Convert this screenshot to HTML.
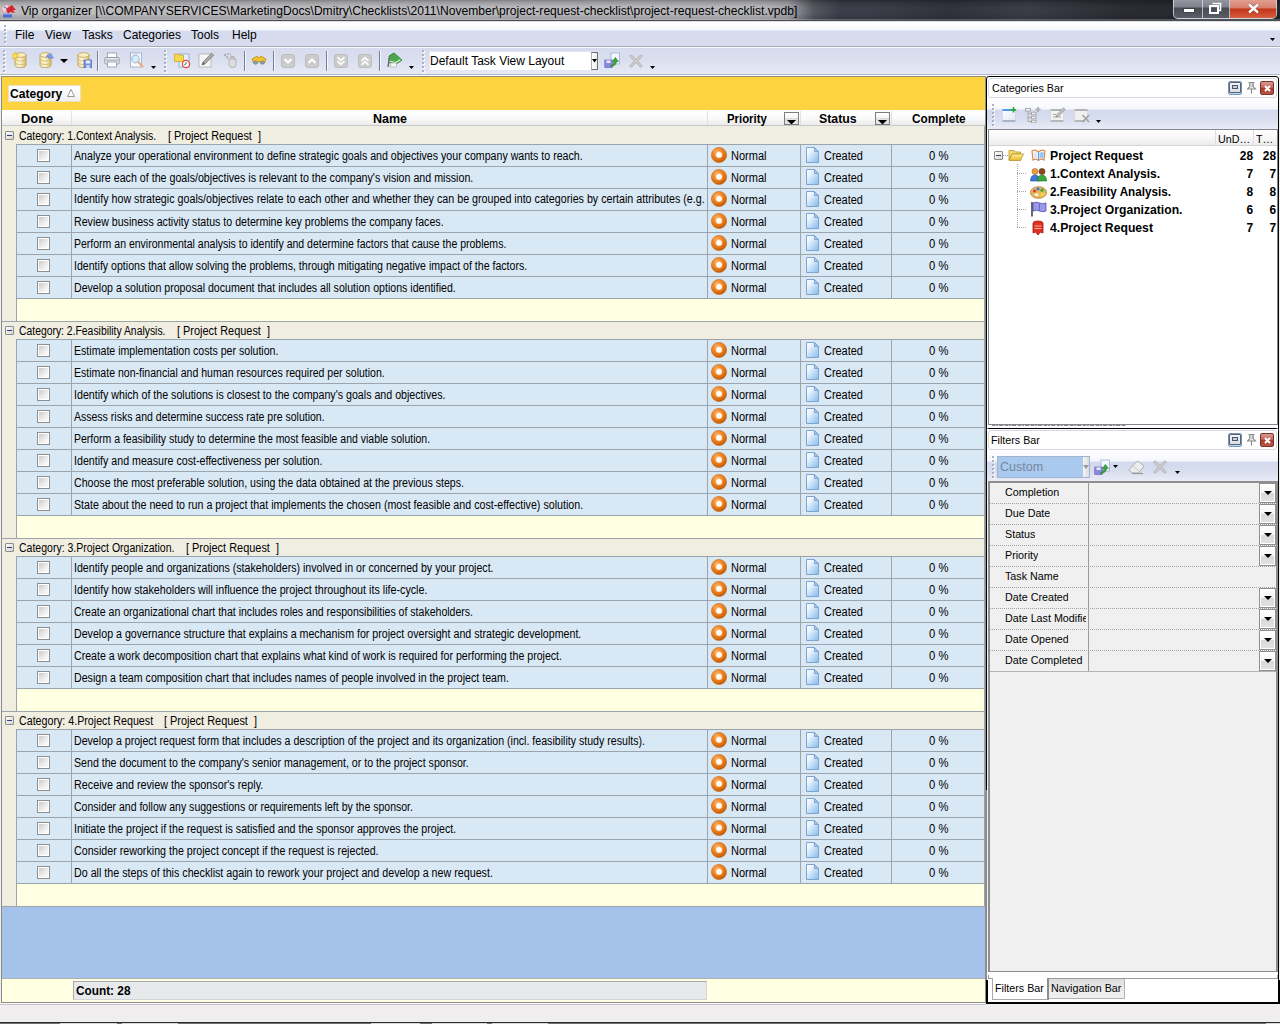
<!DOCTYPE html>
<html lang="en"><head><meta charset="utf-8"><title>Vip organizer</title>
<style>
html,body{margin:0;padding:0}
body{width:1280px;height:1024px;position:relative;overflow:hidden;background:#f0f0f0;font-family:"Liberation Sans",sans-serif;color:#000}
div,span,svg{position:absolute;box-sizing:border-box}
.g{white-space:pre;font-size:12.5px;line-height:16px;transform:scaleX(.848);transform-origin:0 0}
.gb{white-space:nowrap;font-size:12.5px;line-height:16px;font-weight:bold;transform:scaleX(.86);transform-origin:0 0}
.ui{white-space:nowrap;font-size:12px;line-height:16px}
.th{white-space:nowrap;font-size:11px;line-height:14px;transform:scaleX(.975);transform-origin:0 0}

</style></head>
<body>
<svg width="0" height="0" style="left:0;top:0"><defs>
<radialGradient id="pg1" cx="38%" cy="30%" r="75%"><stop offset="0" stop-color="#ffb060"/><stop offset="0.45" stop-color="#f08420"/><stop offset="0.8" stop-color="#d96a0c"/><stop offset="1" stop-color="#a84c06"/></radialGradient>
<radialGradient id="pg2" cx="50%" cy="50%" r="50%"><stop offset="0" stop-color="#fff"/><stop offset="0.62" stop-color="#fff"/><stop offset="1" stop-color="#ffd09a" stop-opacity="0.6"/></radialGradient>
<linearGradient id="pgd" x1="0" y1="0" x2="1" y2="1"><stop offset="0" stop-color="#ffffff"/><stop offset="0.3" stop-color="#eaf3fc"/><stop offset="0.65" stop-color="#b4d6f4"/><stop offset="1" stop-color="#86bbec"/></linearGradient>
<g id="prio"><circle cx="8" cy="8" r="7.6" fill="url(#pg1)" stroke="#c46a18" stroke-width="0.6"/><circle cx="8" cy="7.8" r="3.5" fill="url(#pg2)"/></g>
<g id="page"><path d="M0.5 0.5 H8.5 L12.5 4.5 V15.5 H0.5 Z" fill="url(#pgd)" stroke="#7ea4d2" stroke-width="1"/><path d="M8.5 0.5 V4.5 H12.5 Z" fill="#a9c6ee" stroke="#7ea4d2" stroke-width="1" stroke-linejoin="round"/></g>

<linearGradient id="fg" x1="0" y1="0" x2="0" y2="1"><stop offset="0" stop-color="#fff0a0"/><stop offset="1" stop-color="#e8b820"/></linearGradient>
<g id="folder"><path d="M1 3.5 H6 L7.5 5 H12.5 V7 H4 L1 13 Z" fill="#f7dc6a" stroke="#b8902a" stroke-width="0.8"/><path d="M4 7 H15.5 L12.5 13.5 H1 Z" fill="url(#fg)" stroke="#b8902a" stroke-width="0.8"/></g>
<g id="ti0"><path d="M2 4 Q5 2 8.5 5 Q12 2 15 4 L14 13 Q11 11 8.5 13.5 Q6 11 3 13 Z" fill="#fff" stroke="#e08a4a" stroke-width="1.2"/><path d="M8.5 5 V13.5" stroke="#6aa0e0" stroke-width="1.2"/><path d="M9.5 6 Q12 4.5 14 5.5 L13.3 11.5 Q11 10.5 9.5 12 Z" fill="#9cc4f2"/><path d="M7.5 6 Q5 4.5 3.2 5.5 L4 11.5 Q6 10.5 7.5 12 Z" fill="#dbe9fa"/></g>
<g id="ti1"><circle cx="5" cy="4.5" r="3" fill="#e8a040" stroke="#a86818" stroke-width="0.6"/><path d="M0.5 14 Q0.5 8 5 8 Q9.5 8 9.5 14 Z" fill="#3a78d8" stroke="#1e4ea0" stroke-width="0.6"/><circle cx="12" cy="4.5" r="3" fill="#8a4a20" stroke="#5a2a10" stroke-width="0.6"/><path d="M7.5 14 Q7.5 8 12 8 Q16.5 8 16.5 14 Z" fill="#3aa83a" stroke="#1e701e" stroke-width="0.6"/></g>
<g id="ti2"><ellipse cx="8.5" cy="8.5" rx="8" ry="5.8" fill="#e8b860" stroke="#a87828" stroke-width="0.8"/><circle cx="4.5" cy="7" r="1.6" fill="#d83a2a"/><circle cx="8" cy="5" r="1.6" fill="#3a78d8"/><circle cx="12" cy="6.2" r="1.6" fill="#3aa83a"/><circle cx="12.5" cy="10.3" r="1.6" fill="#f0e040"/><ellipse cx="6.5" cy="10.8" rx="2" ry="1.3" fill="#fff8e0"/></g>
<g id="ti3"><path d="M2 1 V15.5" stroke="#444" stroke-width="1.6"/><path d="M3 2 Q6.5 0.5 9.5 2 Q13 3.5 16 2 V10 Q13 11.5 9.5 10 Q6.5 8.5 3 10 Z" fill="#9a9ae8" stroke="#4a4ab0" stroke-width="0.8"/><path d="M9.5 2 V10" stroke="#5a5ac0" stroke-width="0.8"/></g>
<g id="ti4"><path d="M3 3 Q3 1 8 1 Q13 1 13 3 V13 L10.5 12 L8 15 L5.5 12 L3 13 Z" fill="#e03020" stroke="#a01810" stroke-width="0.8"/><path d="M4.5 6 H11.5 M4.5 8.5 H11.5" stroke="#ffb0a0" stroke-width="1.2"/></g>

<linearGradient id="dbg" x1="0" y1="0" x2="1" y2="0"><stop offset="0" stop-color="#f3e3a8"/><stop offset="0.45" stop-color="#fdf6d8"/><stop offset="1" stop-color="#d9bd6a"/></linearGradient>
<g id="db"><path d="M2 3 V13 Q2 15.5 7.5 15.5 Q13 15.5 13 13 V3 Z" fill="url(#dbg)" stroke="#b79a4c" stroke-width="0.8"/><ellipse cx="7.5" cy="3" rx="5.5" ry="2.3" fill="#fbf0c4" stroke="#b79a4c" stroke-width="0.8"/><path d="M2 6.5 Q2 9 7.5 9 Q13 9 13 6.5 M2 10 Q2 12.5 7.5 12.5 Q13 12.5 13 10" fill="none" stroke="#c9ad5c" stroke-width="0.7"/></g>
<g id="tb0"><use href="#db" x="1"/><path d="M3 0 L4 2.6 L6.8 2.8 L4.6 4.6 L5.4 7.2 L3 5.7 L0.6 7.2 L1.4 4.6 L-0.8 2.8 L2 2.6 Z" fill="#ffe24a" stroke="#d8a818" stroke-width="0.5"/></g>
<g id="tb1"><use href="#db"/><path d="M8 5 Q9 1.5 12 2.5 L12.5 1 L15.5 6 L10 6.5 L11 4.5 Q9.5 4 9 5.5 Z" fill="#7f9fe4" stroke="#5f80cc" stroke-width="0.5"/></g>
<g id="tb2"><use href="#db"/><rect x="8" y="8" width="8" height="8" fill="#7b8fd8" stroke="#5a6cb8" stroke-width="0.8"/><rect x="9.8" y="8.5" width="4.4" height="3" fill="#e8eefc"/><rect x="10.2" y="13" width="3.6" height="3" fill="#c8d2f0"/></g>
<g id="tb3"><rect x="3.5" y="1" width="9" height="5" fill="#fff" stroke="#9098a8" stroke-width="0.8"/><rect x="0.8" y="5.5" width="14.4" height="6.5" rx="1.2" fill="#e4e6ec" stroke="#8890a0" stroke-width="0.8"/><rect x="3.5" y="10" width="9" height="5" fill="#fff" stroke="#9098a8" stroke-width="0.8"/><rect x="1.5" y="7.5" width="13" height="1.6" fill="#b8bcc8"/></g>
<g id="tb4"><rect x="1.5" y="1" width="11" height="14" fill="#f8f9fc" stroke="#a0a8b8" stroke-width="0.8"/><circle cx="6.5" cy="7" r="3.8" fill="#d8ebf8" stroke="#9cc4e4" stroke-width="1.2"/><path d="M9.3 10 L13.5 14.5" stroke="#e4ae80" stroke-width="2" stroke-linecap="round"/></g>
<g id="tb5"><rect x="5" y="2" width="10" height="13" fill="#e8f0fc" stroke="#8aa4d0" stroke-width="0.8"/><path d="M0.5 2 H4.5 L5.5 3.2 H9.5 V9.5 H0.5 Z" fill="#f8d84a" stroke="#c8a020" stroke-width="0.7"/><circle cx="12" cy="12" r="3.6" fill="#fff" stroke="#e04a4a" stroke-width="1.3"/><path d="M12 12 L10.2 12.8 M12 12 V10" stroke="#3a8a5a" stroke-width="1"/></g>
<g id="tb6"><rect x="1" y="2" width="12" height="13" fill="#f6f6f6" stroke="#b0b0b0" stroke-width="0.8"/><path d="M4 13 L5 10 L13.5 1.2 L15.8 3.2 L7 12 Z" fill="#a8a8a8" stroke="#787878" stroke-width="0.7"/><path d="M4 13 L5 10 L7 12 Z" fill="#606060"/></g>
<g id="tb7"><path d="M7 7 H14 V13 Q14 15.5 10.5 15.5 Q7 15.5 7 13 Z" fill="#dcdcdc" stroke="#a8a8a8" stroke-width="0.8"/><path d="M9 7 V4.5 H12 V7" fill="#c8c8c8" stroke="#a0a0a0" stroke-width="0.7"/><circle cx="3" cy="3" r="1.3" fill="#b0b0b0"/><circle cx="6" cy="1.8" r="1.1" fill="#b8b8b8"/><circle cx="5.2" cy="5.2" r="1.2" fill="#b0b0b0"/><circle cx="8.5" cy="2.5" r="1" fill="#bcbcbc"/></g>
<g id="tb8"><path d="M1 6 L6 3 L8 5 L10 3 L15 6 L13.5 10 Q11.5 12 9.5 10 L8 8 L6.5 10 Q4.5 12 2.5 10 Z" fill="#f0c030" stroke="#b88810" stroke-width="0.7"/><ellipse cx="4.6" cy="9.6" rx="2" ry="1.6" fill="#8aa4b8" stroke="#5a6a78" stroke-width="0.5"/><ellipse cx="11.4" cy="9.6" rx="2" ry="1.6" fill="#8aa4b8" stroke="#5a6a78" stroke-width="0.5"/></g>
<g id="gbtn"><rect x="0.5" y="0.5" width="13" height="13" rx="2" fill="#cbcbcb" stroke="#bdbdbd" stroke-width="1"/></g>
<g id="tb9"><use href="#gbtn"/><path d="M3.5 5 L7 8.5 L10.5 5" fill="none" stroke="#fff" stroke-width="2.2"/></g>
<g id="tb10"><use href="#gbtn"/><path d="M3.5 9 L7 5.5 L10.5 9" fill="none" stroke="#fff" stroke-width="2.2"/></g>
<g id="tb11"><use href="#gbtn"/><path d="M3.5 3.2 L7 6.4 L10.5 3.2 M3.5 7.2 L7 10.4 L10.5 7.2" fill="none" stroke="#fff" stroke-width="1.8"/></g>
<g id="tb12"><use href="#gbtn"/><path d="M3.5 6.8 L7 3.6 L10.5 6.8 M3.5 10.8 L7 7.6 L10.5 10.8" fill="none" stroke="#fff" stroke-width="1.8"/></g>
<g id="tb13"><path d="M2 14.5 L3.5 3.5 L8 1 L16 8 L10.5 12 L4 10.5" fill="#4aa84a" stroke="#2a7a2a" stroke-width="0.8"/><path d="M3 9 L10 10.5 L14.5 7.5" fill="none" stroke="#d8f0d0" stroke-width="1.2"/><path d="M2 15 L3.5 4" stroke="#6a6a6a" stroke-width="1.2"/><rect x="4.5" y="11" width="6" height="4" fill="#f4f4f4" stroke="#a8a8a8" stroke-width="0.6"/></g>
<g id="tb14"><rect x="7" y="1" width="8.5" height="11" fill="#f4f8fe" stroke="#9ab0d8" stroke-width="0.8"/><rect x="0.8" y="8" width="7.5" height="7.5" fill="#8a8ae0" stroke="#6a6ac0" stroke-width="0.7"/><rect x="2.5" y="8.4" width="4" height="2.6" fill="#e8e8fc"/><path d="M6 14 Q9 13.5 10.2 9.5 L8.4 9.5 L11.4 5.4 L14.4 9.5 L12.6 9.5 Q11.5 15 6 14 Z" fill="#3aa83a" stroke="#1e7a1e" stroke-width="0.6"/></g>
<g id="tb15"><path d="M2 2 L12 12 M12 2 L2 12" stroke="#b4b4b4" stroke-width="3" stroke-linecap="round"/><path d="M2 2 L12 12 M12 2 L2 12" stroke="#d0d0d0" stroke-width="1.2" stroke-linecap="round"/></g>
<g id="dar"><path d="M0 0 H5 L2.5 3 Z" fill="#000"/></g>

<linearGradient id="cwg" x1="0" y1="0" x2="1" y2="1"><stop offset="0" stop-color="#fff"/><stop offset="1" stop-color="#dfe6f2"/></linearGradient>
<g id="ct0"><rect x="0.5" y="3.5" width="13" height="10" fill="url(#cwg)" stroke="#c8d0e0" stroke-width="0.6"/><path d="M0.5 3 H13.5" stroke="#2a8ae0" stroke-width="1.6"/><path d="M0.5 14 H13.5" stroke="#8a9ab0" stroke-width="1.2"/><path d="M11.5 0 V5.4 M8.8 2.7 H14.2" stroke="#2aa82a" stroke-width="1.6"/></g>
<g id="ct1"><path d="M3 3 V14.5 M3 6.5 H7 M3 10.5 H7 M3 14.5 H7" fill="none" stroke="#a8a8a8" stroke-width="1"/><rect x="0.5" y="1.5" width="5" height="2.6" fill="#f0f0f0" stroke="#a0a0a0" stroke-width="0.8"/><rect x="6.5" y="5.2" width="4.5" height="2.6" fill="#f0f0f0" stroke="#a0a0a0" stroke-width="0.8"/><rect x="6.5" y="9.2" width="4.5" height="2.6" fill="#f0f0f0" stroke="#a0a0a0" stroke-width="0.8"/><rect x="6.5" y="13.2" width="4.5" height="2.6" fill="#f0f0f0" stroke="#a0a0a0" stroke-width="0.8"/><path d="M13 0 V5 M10.5 2.5 H15.5" stroke="#b0b0b0" stroke-width="1.8"/></g>
<g id="ct2"><rect x="0.5" y="3.5" width="13" height="10" fill="#f2f2f2" stroke="#d0d0d0" stroke-width="0.6"/><path d="M0.5 3 H13.5" stroke="#a8a8a8" stroke-width="1.6"/><path d="M0.5 14 H13.5" stroke="#a0a0a0" stroke-width="1.2"/><path d="M3 7.5 H6 M3 10 H11" stroke="#a8a8a8" stroke-width="1"/><path d="M6 10 L7 7.5 L13.5 0.8 L15.2 2.4 L8.6 9.2 Z" fill="#c8c8c8" stroke="#8a8a8a" stroke-width="0.7"/></g>
<g id="ct3"><rect x="0.5" y="2.5" width="13" height="10" fill="#f0f0f0" stroke="#d0d0d0" stroke-width="0.6"/><path d="M0.5 2 H13.5" stroke="#a8a8a8" stroke-width="1.6"/><path d="M0.5 13 H11" stroke="#a0a0a0" stroke-width="1.2"/><path d="M8.5 7 L15 14 M15 7 L8.5 14" stroke="#a0a0a0" stroke-width="1.5"/></g>
<g id="ft1"><path d="M1 10 L8 2 Q9.5 1 11 2 L15 5 Q16 6.5 15 8 L10 13 H4 Z" fill="#ececec" stroke="#a8a8a8" stroke-width="0.9"/><path d="M4 13.5 H15" stroke="#9a9a9a" stroke-width="1.3"/><path d="M5 6 L11 11" stroke="#c0c0c0" stroke-width="0.8"/></g>
</defs></svg>
<!-- title bar -->
<div style="left:0px;top:0px;width:1280px;height:22px;background:linear-gradient(100deg,#3b3e48 0,#3b3e48 68%,#30333b 74%,#3a3d46 80%,#2a2c33 88%,#24262c 100%)"></div>
<div style="left:-30px;top:-4px;width:870px;height:28px;background:linear-gradient(90deg,#bdbdc0 0,#b8b8bc 90%,rgba(184,184,188,.85) 94%,rgba(120,122,130,.4) 97%,rgba(59,62,72,0) 100%)"></div>
<div style="left:0px;top:0px;width:1280px;height:20px;background:linear-gradient(rgba(0,0,0,.3) 0,rgba(0,0,0,.16) 12%,rgba(0,0,0,0) 35%,rgba(0,0,0,0) 65%,rgba(0,0,0,.16) 100%)"></div>
<div style="left:0px;top:19px;width:1280px;height:1px;background:rgba(255,255,255,.22)"></div>
<div style="left:0px;top:20px;width:1280px;height:1px;background:#4a4b50"></div>
<div style="left:0px;top:21px;width:1280px;height:1px;background:#dfe0e6"></div>
<svg style="left:0px;top:3px" width="17" height="16" viewBox="0 0 17 16"><path d="M1 5 L7 1 L10 6 L4 10 Z" fill="#f4d0d4" stroke="#d88a94" stroke-width="0.7"/><path d="M6 6 L12 2 L16 7 L13 7 L15 10 L10 9 L8 11 Z" fill="#d8242c"/><path d="M3 11 H12 V14.5 H3 Z" fill="#4a6ad0"/><path d="M3 11 H12" stroke="#9ab0f0" stroke-width="1"/><path d="M4 4 L8 6" stroke="#5a6ac8" stroke-width="1"/></svg>
<span class="ui" style="left:21px;top:3px;font-size:12.5px;transform:scaleX(.967);transform-origin:0 0" id="ttl">Vip organizer [\\COMPANYSERVICES\MarketingDocs\Dmitry\Checklists\2011\November\project-request-checklist\project-request-checklist.vpdb]</span>
<div style="left:1173px;top:-3px;width:104px;height:22px;border:1px solid rgba(225,228,235,.75);border-radius:0 0 5px 5px;overflow:hidden;background:linear-gradient(#9a9da6 0,#7e818b 45%,#474a53 50%,#5a5d66 100%)"><div style="left:28px;top:0;width:1px;height:22px;background:rgba(225,228,235,.7)"></div><div style="left:55px;top:0;width:1px;height:22px;background:rgba(225,228,235,.7)"></div><div style="left:56px;top:0;width:47px;height:22px;background:linear-gradient(#e3a79a 0,#d77f6c 45%,#c4361a 50%,#d4573a 85%,#e07a50 100%)"></div></div>
<div style="left:1184px;top:9px;width:10px;height:3px;background:#fff;box-shadow:0 0 0 1px rgba(60,60,70,.6)"></div>
<svg style="left:1208px;top:2px" width="14" height="12" viewBox="0 0 14 12"><path d="M4.5 1.5 H12.5 V8.5 H10" fill="none" stroke="#fff" stroke-width="1.6"/><rect x="2" y="4" width="8" height="7" fill="none" stroke="#fff" stroke-width="2"/></svg>
<svg style="left:1247px;top:3px" width="13" height="11" viewBox="0 0 13 11"><path d="M2 1.5 L11 9.5 M11 1.5 L2 9.5" stroke="#5a1a10" stroke-width="3.6" opacity=".5"/><path d="M2 1.5 L11 9.5 M11 1.5 L2 9.5" stroke="#fff" stroke-width="2.4"/></svg>
<!-- menu bar -->
<div style="left:0px;top:22px;width:1280px;height:24px;background:linear-gradient(#fff 0,#f7f8fc 33%,#d6dbee 38%,#d6dbee 100%)"></div>
<div style="left:5px;top:26px;width:2px;height:2px;background:#fff"></div>
<div style="left:4px;top:25px;width:2px;height:2px;background:#aab0c6"></div>
<div style="left:5px;top:30px;width:2px;height:2px;background:#fff"></div>
<div style="left:4px;top:29px;width:2px;height:2px;background:#aab0c6"></div>
<div style="left:5px;top:34px;width:2px;height:2px;background:#fff"></div>
<div style="left:4px;top:33px;width:2px;height:2px;background:#aab0c6"></div>
<div style="left:5px;top:38px;width:2px;height:2px;background:#fff"></div>
<div style="left:4px;top:37px;width:2px;height:2px;background:#aab0c6"></div>
<div style="left:5px;top:42px;width:2px;height:2px;background:#fff"></div>
<div style="left:4px;top:41px;width:2px;height:2px;background:#aab0c6"></div>
<svg style="left:1270px;top:38px" width="5" height="3" viewBox="0 0 5 3"><path d="M0 0 H5 L2.5 3 Z" fill="#000"/></svg>
<span class="ui" style="left:15px;top:27px">File</span>
<span class="ui" style="left:45px;top:27px">View</span>
<span class="ui" style="left:82px;top:27px">Tasks</span>
<span class="ui" style="left:123px;top:27px">Categories</span>
<span class="ui" style="left:191px;top:27px">Tools</span>
<span class="ui" style="left:232px;top:27px">Help</span>
<!-- toolbar -->
<div style="left:0px;top:46px;width:1280px;height:30px;background:linear-gradient(#d5daed 0,#dbe0f0 50%,#e8ebf6 100%)"></div>
<div style="left:0px;top:46px;width:1280px;height:1px;background:#a8acbc"></div>
<div style="left:0px;top:47px;width:1280px;height:1px;background:#f8f9fd"></div>
<div style="left:0px;top:74px;width:1280px;height:1px;background:#b2b5c2"></div>
<div style="left:0px;top:75px;width:1280px;height:1px;background:#fbfbfe"></div>
<div style="left:4px;top:51px;width:2px;height:2px;background:#fff"></div>
<div style="left:3px;top:50px;width:2px;height:2px;background:#aab0c6"></div>
<div style="left:4px;top:55px;width:2px;height:2px;background:#fff"></div>
<div style="left:3px;top:54px;width:2px;height:2px;background:#aab0c6"></div>
<div style="left:4px;top:59px;width:2px;height:2px;background:#fff"></div>
<div style="left:3px;top:58px;width:2px;height:2px;background:#aab0c6"></div>
<div style="left:4px;top:63px;width:2px;height:2px;background:#fff"></div>
<div style="left:3px;top:62px;width:2px;height:2px;background:#aab0c6"></div>
<div style="left:4px;top:67px;width:2px;height:2px;background:#fff"></div>
<div style="left:3px;top:66px;width:2px;height:2px;background:#aab0c6"></div>
<div style="left:4px;top:71px;width:2px;height:2px;background:#fff"></div>
<div style="left:3px;top:70px;width:2px;height:2px;background:#aab0c6"></div>
<svg style="left:12px;top:52px" width="16" height="16" viewBox="0 0 16 16"><use href="#tb0"/></svg>
<svg style="left:38px;top:52px" width="16" height="16" viewBox="0 0 16 16"><use href="#tb1"/></svg>
<svg style="left:60px;top:59px" width="8" height="4" viewBox="0 0 8 4"><path d="M0 0 H8 L4 4 Z" fill="#000"/></svg>
<svg style="left:76px;top:52px" width="16" height="16" viewBox="0 0 16 16"><use href="#tb2"/></svg>
<div style="left:97px;top:51px;width:1px;height:20px;background:#7a8094"></div>
<div style="left:98px;top:51px;width:1px;height:20px;background:#f4f6fb"></div>
<svg style="left:104px;top:52px" width="16" height="16" viewBox="0 0 16 16"><use href="#tb3"/></svg>
<svg style="left:129px;top:52px" width="16" height="16" viewBox="0 0 16 16"><use href="#tb4"/></svg>
<svg style="left:151px;top:66px" width="5" height="3" viewBox="0 0 5 3"><use href="#dar"/></svg>
<div style="left:165px;top:51px;width:2px;height:2px;background:#fff"></div>
<div style="left:164px;top:50px;width:2px;height:2px;background:#aab0c6"></div>
<div style="left:165px;top:55px;width:2px;height:2px;background:#fff"></div>
<div style="left:164px;top:54px;width:2px;height:2px;background:#aab0c6"></div>
<div style="left:165px;top:59px;width:2px;height:2px;background:#fff"></div>
<div style="left:164px;top:58px;width:2px;height:2px;background:#aab0c6"></div>
<div style="left:165px;top:63px;width:2px;height:2px;background:#fff"></div>
<div style="left:164px;top:62px;width:2px;height:2px;background:#aab0c6"></div>
<div style="left:165px;top:67px;width:2px;height:2px;background:#fff"></div>
<div style="left:164px;top:66px;width:2px;height:2px;background:#aab0c6"></div>
<div style="left:165px;top:71px;width:2px;height:2px;background:#fff"></div>
<div style="left:164px;top:70px;width:2px;height:2px;background:#aab0c6"></div>
<svg style="left:174px;top:52px" width="17" height="17" viewBox="0 0 17 17"><use href="#tb5"/></svg>
<svg style="left:198px;top:52px" width="16" height="16" viewBox="0 0 16 16"><use href="#tb6"/></svg>
<svg style="left:222px;top:52px" width="16" height="16" viewBox="0 0 16 16"><use href="#tb7"/></svg>
<div style="left:244px;top:51px;width:1px;height:20px;background:#7a8094"></div>
<div style="left:245px;top:51px;width:1px;height:20px;background:#f4f6fb"></div>
<svg style="left:251px;top:53px" width="16" height="16" viewBox="0 0 16 16"><use href="#tb8"/></svg>
<div style="left:273px;top:51px;width:1px;height:20px;background:#7a8094"></div>
<div style="left:274px;top:51px;width:1px;height:20px;background:#f4f6fb"></div>
<svg style="left:281px;top:54px" width="14" height="14" viewBox="0 0 14 14"><use href="#tb9"/></svg>
<svg style="left:305px;top:54px" width="14" height="14" viewBox="0 0 14 14"><use href="#tb10"/></svg>
<div style="left:326px;top:51px;width:1px;height:20px;background:#7a8094"></div>
<div style="left:327px;top:51px;width:1px;height:20px;background:#f4f6fb"></div>
<svg style="left:334px;top:54px" width="14" height="14" viewBox="0 0 14 14"><use href="#tb11"/></svg>
<svg style="left:358px;top:54px" width="14" height="14" viewBox="0 0 14 14"><use href="#tb12"/></svg>
<div style="left:379px;top:51px;width:1px;height:20px;background:#7a8094"></div>
<div style="left:380px;top:51px;width:1px;height:20px;background:#f4f6fb"></div>
<svg style="left:386px;top:52px" width="17" height="16" viewBox="0 0 17 16"><use href="#tb13"/></svg>
<svg style="left:409px;top:66px" width="5" height="3" viewBox="0 0 5 3"><use href="#dar"/></svg>
<div style="left:423px;top:51px;width:2px;height:2px;background:#fff"></div>
<div style="left:422px;top:50px;width:2px;height:2px;background:#aab0c6"></div>
<div style="left:423px;top:55px;width:2px;height:2px;background:#fff"></div>
<div style="left:422px;top:54px;width:2px;height:2px;background:#aab0c6"></div>
<div style="left:423px;top:59px;width:2px;height:2px;background:#fff"></div>
<div style="left:422px;top:58px;width:2px;height:2px;background:#aab0c6"></div>
<div style="left:423px;top:63px;width:2px;height:2px;background:#fff"></div>
<div style="left:422px;top:62px;width:2px;height:2px;background:#aab0c6"></div>
<div style="left:423px;top:67px;width:2px;height:2px;background:#fff"></div>
<div style="left:422px;top:66px;width:2px;height:2px;background:#aab0c6"></div>
<div style="left:423px;top:71px;width:2px;height:2px;background:#fff"></div>
<div style="left:422px;top:70px;width:2px;height:2px;background:#aab0c6"></div>
<div style="left:429px;top:51px;width:170px;height:20px;background:#fff;border:1px solid #e3e6f0"></div>
<div style="left:591px;top:52px;width:7px;height:18px;background:linear-gradient(90deg,#fff,#ececec);border:1px solid #707070;border-left-color:#b0b0b0"></div>
<svg style="left:592px;top:59px" width="5" height="4" viewBox="0 0 5 4"><path d="M0 0 H5 L2.5 3.5 Z" fill="#000"/></svg>
<span class="ui" style="left:430px;top:53px">Default Task View Layout</span>
<svg style="left:604px;top:52px" width="17" height="16" viewBox="0 0 17 16"><use href="#tb14"/></svg>
<svg style="left:629px;top:54px" width="14" height="14" viewBox="0 0 14 14"><use href="#tb15"/></svg>
<svg style="left:650px;top:66px" width="5" height="3" viewBox="0 0 5 3"><use href="#dar"/></svg>
<!-- task grid -->
<div style="left:1px;top:76px;width:985px;height:927px;background:#a5c3ea;border:1px solid #8c8c8c;border-top-color:#8e8a74"></div>
<div style="left:2px;top:77px;width:983px;height:33px;background:#fdd33f"></div>
<div style="left:8px;top:85px;width:73px;height:17px;background:linear-gradient(#fff,#f1f1f1);border:1px solid #e6e0c0"></div>
<span class="gb" style="left:10px;top:86px;transform:scaleX(.965)">Category</span>
<svg style="left:66px;top:88px" width="10" height="10" viewBox="0 0 10 10"><path d="M1.5 8.5 L5 1.5 L8.5 8.5 Z" fill="#fff" stroke="#9a9a9a" stroke-width="1"/></svg>
<div style="left:2px;top:110px;width:983px;height:16px;background:linear-gradient(#fff 0,#fbfbfb 50%,#ebebeb 100%);border-bottom:1px solid #c9c9c9"></div>
<div style="left:71px;top:111px;width:1px;height:14px;background:#e2e2e2"></div>
<div style="left:707px;top:111px;width:1px;height:14px;background:#e2e2e2"></div>
<div style="left:800px;top:111px;width:1px;height:14px;background:#e2e2e2"></div>
<div style="left:891px;top:111px;width:1px;height:14px;background:#e2e2e2"></div>
<span class="gb" style="left:20.5px;top:111px;transform:scaleX(1.03)">Done</span>
<span class="gb" style="left:373px;top:111px;transform:scaleX(1.0)">Name</span>
<span class="gb" style="left:726.5px;top:111px;transform:scaleX(0.908)">Priority</span>
<span class="gb" style="left:819px;top:111px;transform:scaleX(0.985)">Status</span>
<span class="gb" style="left:912px;top:111px;transform:scaleX(0.942)">Complete</span>
<div style="left:784px;top:112px;width:15px;height:13px;background:linear-gradient(#fff 0,#f4f4f4 45%,#dedede 50%,#e6e6e6 100%);border:1px solid #7d7d7d"></div>
<svg style="left:787px;top:120px" width="9" height="4" viewBox="0 0 9 4"><path d="M0 0 H9 L4.5 4.5 Z" fill="#000"/></svg>
<div style="left:875px;top:112px;width:15px;height:13px;background:linear-gradient(#fff 0,#f4f4f4 45%,#dedede 50%,#e6e6e6 100%);border:1px solid #7d7d7d"></div>
<svg style="left:878px;top:120px" width="9" height="4" viewBox="0 0 9 4"><path d="M0 0 H9 L4.5 4.5 Z" fill="#000"/></svg>
<div style="left:2px;top:126px;width:983px;height:1px;background:#f0ede1"></div>
<div style="left:2px;top:127px;width:983px;height:18px;background:#f0ede1"></div>
<div style="left:16px;top:144px;width:969px;height:1px;background:#9ca5ad"></div>
<div style="left:5px;top:131px;width:9px;height:9px;background:linear-gradient(135deg,#fff,#d6d4c8);border:1px solid #8c8c8c;border-radius:1px"></div>
<div style="left:7px;top:135px;width:5px;height:1px;background:#2a3a8c"></div>
<span class="g" style="left:19px;top:128px;transform:scaleX(0.837)">Category: 1.Context Analysis.</span>
<span class="g" style="left:168px;top:128px;transform:scaleX(.875)">[ Project Request  ]</span>
<div style="left:2px;top:145px;width:15px;height:177px;background:#f0ede1;border-right:1px solid #9ca5ad"></div>
<div style="left:17px;top:145px;width:968px;height:22px;background:#d9e8f5;border-bottom:1px solid #9ca5ad"></div>
<div style="left:71px;top:145px;width:1px;height:21px;background:#9ca5ad"></div>
<div style="left:707px;top:145px;width:1px;height:21px;background:#9ca5ad"></div>
<div style="left:800px;top:145px;width:1px;height:21px;background:#9ca5ad"></div>
<div style="left:891px;top:145px;width:1px;height:21px;background:#9ca5ad"></div>
<div style="left:37px;top:149px;width:13px;height:13px;background:linear-gradient(135deg,#c9c9c9,#ececec 55%,#fdfdfd) content-box,#fff;padding:1px;border:1px solid #8e8f8f"></div>
<span class="g" style="left:73.5px;top:148px;max-width:745px;overflow:hidden;transform:scaleX(0.8492)">Analyze your operational environment to define strategic goals and objectives your company wants to reach.</span>
<svg style="left:711px;top:147px" width="16" height="16" viewBox="0 0 16 16"><use href="#prio"/></svg><span class="g" style="left:731px;top:148px;transform:scaleX(.88)">Normal</span>
<svg style="left:806px;top:147px" width="13" height="16" viewBox="0 0 13 16"><use href="#page"/></svg><span class="g" style="left:824px;top:148px;transform:scaleX(.875)">Created</span>
<span class="g" style="left:929px;top:148px;transform:scaleX(.9)">0 %</span>
<div style="left:17px;top:167px;width:968px;height:22px;background:#d9e8f5;border-bottom:1px solid #9ca5ad"></div>
<div style="left:71px;top:167px;width:1px;height:21px;background:#9ca5ad"></div>
<div style="left:707px;top:167px;width:1px;height:21px;background:#9ca5ad"></div>
<div style="left:800px;top:167px;width:1px;height:21px;background:#9ca5ad"></div>
<div style="left:891px;top:167px;width:1px;height:21px;background:#9ca5ad"></div>
<div style="left:37px;top:171px;width:13px;height:13px;background:linear-gradient(135deg,#c9c9c9,#ececec 55%,#fdfdfd) content-box,#fff;padding:1px;border:1px solid #8e8f8f"></div>
<span class="g" style="left:73.5px;top:170px;max-width:745px;overflow:hidden;transform:scaleX(0.8534)">Be sure each of the goals/objectives is relevant to the company&#x27;s vision and mission.</span>
<svg style="left:711px;top:169px" width="16" height="16" viewBox="0 0 16 16"><use href="#prio"/></svg><span class="g" style="left:731px;top:170px;transform:scaleX(.88)">Normal</span>
<svg style="left:806px;top:169px" width="13" height="16" viewBox="0 0 13 16"><use href="#page"/></svg><span class="g" style="left:824px;top:170px;transform:scaleX(.875)">Created</span>
<span class="g" style="left:929px;top:170px;transform:scaleX(.9)">0 %</span>
<div style="left:17px;top:189px;width:968px;height:22px;background:#d9e8f5;border-bottom:1px solid #9ca5ad"></div>
<div style="left:71px;top:189px;width:1px;height:21px;background:#9ca5ad"></div>
<div style="left:707px;top:189px;width:1px;height:21px;background:#9ca5ad"></div>
<div style="left:800px;top:189px;width:1px;height:21px;background:#9ca5ad"></div>
<div style="left:891px;top:189px;width:1px;height:21px;background:#9ca5ad"></div>
<div style="left:37px;top:193px;width:13px;height:13px;background:linear-gradient(135deg,#c9c9c9,#ececec 55%,#fdfdfd) content-box,#fff;padding:1px;border:1px solid #8e8f8f"></div>
<span class="g" style="left:73.5px;top:191px;max-width:745px;overflow:hidden;transform:scaleX(0.8563)">Identify how strategic goals/objectives relate to each other and whether they can be grouped into categories by certain attributes (e.g.</span>
<svg style="left:711px;top:191px" width="16" height="16" viewBox="0 0 16 16"><use href="#prio"/></svg><span class="g" style="left:731px;top:192px;transform:scaleX(.88)">Normal</span>
<svg style="left:806px;top:191px" width="13" height="16" viewBox="0 0 13 16"><use href="#page"/></svg><span class="g" style="left:824px;top:192px;transform:scaleX(.875)">Created</span>
<span class="g" style="left:929px;top:192px;transform:scaleX(.9)">0 %</span>
<div style="left:17px;top:211px;width:968px;height:22px;background:#d9e8f5;border-bottom:1px solid #9ca5ad"></div>
<div style="left:71px;top:211px;width:1px;height:21px;background:#9ca5ad"></div>
<div style="left:707px;top:211px;width:1px;height:21px;background:#9ca5ad"></div>
<div style="left:800px;top:211px;width:1px;height:21px;background:#9ca5ad"></div>
<div style="left:891px;top:211px;width:1px;height:21px;background:#9ca5ad"></div>
<div style="left:37px;top:215px;width:13px;height:13px;background:linear-gradient(135deg,#c9c9c9,#ececec 55%,#fdfdfd) content-box,#fff;padding:1px;border:1px solid #8e8f8f"></div>
<span class="g" style="left:73.5px;top:214px;max-width:745px;overflow:hidden;transform:scaleX(0.8498)">Review business activity status to determine key problems the company faces.</span>
<svg style="left:711px;top:213px" width="16" height="16" viewBox="0 0 16 16"><use href="#prio"/></svg><span class="g" style="left:731px;top:214px;transform:scaleX(.88)">Normal</span>
<svg style="left:806px;top:213px" width="13" height="16" viewBox="0 0 13 16"><use href="#page"/></svg><span class="g" style="left:824px;top:214px;transform:scaleX(.875)">Created</span>
<span class="g" style="left:929px;top:214px;transform:scaleX(.9)">0 %</span>
<div style="left:17px;top:233px;width:968px;height:22px;background:#d9e8f5;border-bottom:1px solid #9ca5ad"></div>
<div style="left:71px;top:233px;width:1px;height:21px;background:#9ca5ad"></div>
<div style="left:707px;top:233px;width:1px;height:21px;background:#9ca5ad"></div>
<div style="left:800px;top:233px;width:1px;height:21px;background:#9ca5ad"></div>
<div style="left:891px;top:233px;width:1px;height:21px;background:#9ca5ad"></div>
<div style="left:37px;top:237px;width:13px;height:13px;background:linear-gradient(135deg,#c9c9c9,#ececec 55%,#fdfdfd) content-box,#fff;padding:1px;border:1px solid #8e8f8f"></div>
<span class="g" style="left:73.5px;top:236px;max-width:745px;overflow:hidden;transform:scaleX(0.8408)">Perform an environmental analysis to identify and determine factors that cause the problems.</span>
<svg style="left:711px;top:235px" width="16" height="16" viewBox="0 0 16 16"><use href="#prio"/></svg><span class="g" style="left:731px;top:236px;transform:scaleX(.88)">Normal</span>
<svg style="left:806px;top:235px" width="13" height="16" viewBox="0 0 13 16"><use href="#page"/></svg><span class="g" style="left:824px;top:236px;transform:scaleX(.875)">Created</span>
<span class="g" style="left:929px;top:236px;transform:scaleX(.9)">0 %</span>
<div style="left:17px;top:255px;width:968px;height:22px;background:#d9e8f5;border-bottom:1px solid #9ca5ad"></div>
<div style="left:71px;top:255px;width:1px;height:21px;background:#9ca5ad"></div>
<div style="left:707px;top:255px;width:1px;height:21px;background:#9ca5ad"></div>
<div style="left:800px;top:255px;width:1px;height:21px;background:#9ca5ad"></div>
<div style="left:891px;top:255px;width:1px;height:21px;background:#9ca5ad"></div>
<div style="left:37px;top:259px;width:13px;height:13px;background:linear-gradient(135deg,#c9c9c9,#ececec 55%,#fdfdfd) content-box,#fff;padding:1px;border:1px solid #8e8f8f"></div>
<span class="g" style="left:73.5px;top:258px;max-width:745px;overflow:hidden;transform:scaleX(0.8471)">Identify options that allow solving the problems, through mitigating negative impact of the factors.</span>
<svg style="left:711px;top:257px" width="16" height="16" viewBox="0 0 16 16"><use href="#prio"/></svg><span class="g" style="left:731px;top:258px;transform:scaleX(.88)">Normal</span>
<svg style="left:806px;top:257px" width="13" height="16" viewBox="0 0 13 16"><use href="#page"/></svg><span class="g" style="left:824px;top:258px;transform:scaleX(.875)">Created</span>
<span class="g" style="left:929px;top:258px;transform:scaleX(.9)">0 %</span>
<div style="left:17px;top:277px;width:968px;height:22px;background:#d9e8f5;border-bottom:1px solid #9ca5ad"></div>
<div style="left:71px;top:277px;width:1px;height:21px;background:#9ca5ad"></div>
<div style="left:707px;top:277px;width:1px;height:21px;background:#9ca5ad"></div>
<div style="left:800px;top:277px;width:1px;height:21px;background:#9ca5ad"></div>
<div style="left:891px;top:277px;width:1px;height:21px;background:#9ca5ad"></div>
<div style="left:37px;top:281px;width:13px;height:13px;background:linear-gradient(135deg,#c9c9c9,#ececec 55%,#fdfdfd) content-box,#fff;padding:1px;border:1px solid #8e8f8f"></div>
<span class="g" style="left:73.5px;top:280px;max-width:745px;overflow:hidden;transform:scaleX(0.8491)">Develop a solution proposal document that includes all solution options identified.</span>
<svg style="left:711px;top:279px" width="16" height="16" viewBox="0 0 16 16"><use href="#prio"/></svg><span class="g" style="left:731px;top:280px;transform:scaleX(.88)">Normal</span>
<svg style="left:806px;top:279px" width="13" height="16" viewBox="0 0 13 16"><use href="#page"/></svg><span class="g" style="left:824px;top:280px;transform:scaleX(.875)">Created</span>
<span class="g" style="left:929px;top:280px;transform:scaleX(.9)">0 %</span>
<div style="left:17px;top:299px;width:968px;height:23px;background:#ffffe1"></div>
<div style="left:2px;top:321px;width:983px;height:1px;background:#9ca5ad"></div>
<div style="left:2px;top:322px;width:983px;height:18px;background:#f0ede1"></div>
<div style="left:16px;top:339px;width:969px;height:1px;background:#9ca5ad"></div>
<div style="left:5px;top:326px;width:9px;height:9px;background:linear-gradient(135deg,#fff,#d6d4c8);border:1px solid #8c8c8c;border-radius:1px"></div>
<div style="left:7px;top:330px;width:5px;height:1px;background:#2a3a8c"></div>
<span class="g" style="left:19px;top:323px;transform:scaleX(0.83)">Category: 2.Feasibility Analysis.</span>
<span class="g" style="left:176.5px;top:323px;transform:scaleX(.875)">[ Project Request  ]</span>
<div style="left:2px;top:340px;width:15px;height:199px;background:#f0ede1;border-right:1px solid #9ca5ad"></div>
<div style="left:17px;top:340px;width:968px;height:22px;background:#d9e8f5;border-bottom:1px solid #9ca5ad"></div>
<div style="left:71px;top:340px;width:1px;height:21px;background:#9ca5ad"></div>
<div style="left:707px;top:340px;width:1px;height:21px;background:#9ca5ad"></div>
<div style="left:800px;top:340px;width:1px;height:21px;background:#9ca5ad"></div>
<div style="left:891px;top:340px;width:1px;height:21px;background:#9ca5ad"></div>
<div style="left:37px;top:344px;width:13px;height:13px;background:linear-gradient(135deg,#c9c9c9,#ececec 55%,#fdfdfd) content-box,#fff;padding:1px;border:1px solid #8e8f8f"></div>
<span class="g" style="left:73.5px;top:343px;max-width:745px;overflow:hidden;transform:scaleX(0.848)">Estimate implementation costs per solution.</span>
<svg style="left:711px;top:342px" width="16" height="16" viewBox="0 0 16 16"><use href="#prio"/></svg><span class="g" style="left:731px;top:343px;transform:scaleX(.88)">Normal</span>
<svg style="left:806px;top:342px" width="13" height="16" viewBox="0 0 13 16"><use href="#page"/></svg><span class="g" style="left:824px;top:343px;transform:scaleX(.875)">Created</span>
<span class="g" style="left:929px;top:343px;transform:scaleX(.9)">0 %</span>
<div style="left:17px;top:362px;width:968px;height:22px;background:#d9e8f5;border-bottom:1px solid #9ca5ad"></div>
<div style="left:71px;top:362px;width:1px;height:21px;background:#9ca5ad"></div>
<div style="left:707px;top:362px;width:1px;height:21px;background:#9ca5ad"></div>
<div style="left:800px;top:362px;width:1px;height:21px;background:#9ca5ad"></div>
<div style="left:891px;top:362px;width:1px;height:21px;background:#9ca5ad"></div>
<div style="left:37px;top:366px;width:13px;height:13px;background:linear-gradient(135deg,#c9c9c9,#ececec 55%,#fdfdfd) content-box,#fff;padding:1px;border:1px solid #8e8f8f"></div>
<span class="g" style="left:73.5px;top:365px;max-width:745px;overflow:hidden;transform:scaleX(0.8439)">Estimate non-financial and human resources required per solution.</span>
<svg style="left:711px;top:364px" width="16" height="16" viewBox="0 0 16 16"><use href="#prio"/></svg><span class="g" style="left:731px;top:365px;transform:scaleX(.88)">Normal</span>
<svg style="left:806px;top:364px" width="13" height="16" viewBox="0 0 13 16"><use href="#page"/></svg><span class="g" style="left:824px;top:365px;transform:scaleX(.875)">Created</span>
<span class="g" style="left:929px;top:365px;transform:scaleX(.9)">0 %</span>
<div style="left:17px;top:384px;width:968px;height:22px;background:#d9e8f5;border-bottom:1px solid #9ca5ad"></div>
<div style="left:71px;top:384px;width:1px;height:21px;background:#9ca5ad"></div>
<div style="left:707px;top:384px;width:1px;height:21px;background:#9ca5ad"></div>
<div style="left:800px;top:384px;width:1px;height:21px;background:#9ca5ad"></div>
<div style="left:891px;top:384px;width:1px;height:21px;background:#9ca5ad"></div>
<div style="left:37px;top:388px;width:13px;height:13px;background:linear-gradient(135deg,#c9c9c9,#ececec 55%,#fdfdfd) content-box,#fff;padding:1px;border:1px solid #8e8f8f"></div>
<span class="g" style="left:73.5px;top:387px;max-width:745px;overflow:hidden;transform:scaleX(0.8521)">Identify which of the solutions is closest to the company&#x27;s goals and objectives.</span>
<svg style="left:711px;top:386px" width="16" height="16" viewBox="0 0 16 16"><use href="#prio"/></svg><span class="g" style="left:731px;top:387px;transform:scaleX(.88)">Normal</span>
<svg style="left:806px;top:386px" width="13" height="16" viewBox="0 0 13 16"><use href="#page"/></svg><span class="g" style="left:824px;top:387px;transform:scaleX(.875)">Created</span>
<span class="g" style="left:929px;top:387px;transform:scaleX(.9)">0 %</span>
<div style="left:17px;top:406px;width:968px;height:22px;background:#d9e8f5;border-bottom:1px solid #9ca5ad"></div>
<div style="left:71px;top:406px;width:1px;height:21px;background:#9ca5ad"></div>
<div style="left:707px;top:406px;width:1px;height:21px;background:#9ca5ad"></div>
<div style="left:800px;top:406px;width:1px;height:21px;background:#9ca5ad"></div>
<div style="left:891px;top:406px;width:1px;height:21px;background:#9ca5ad"></div>
<div style="left:37px;top:410px;width:13px;height:13px;background:linear-gradient(135deg,#c9c9c9,#ececec 55%,#fdfdfd) content-box,#fff;padding:1px;border:1px solid #8e8f8f"></div>
<span class="g" style="left:73.5px;top:409px;max-width:745px;overflow:hidden;transform:scaleX(0.8409)">Assess risks and determine success rate pre solution.</span>
<svg style="left:711px;top:408px" width="16" height="16" viewBox="0 0 16 16"><use href="#prio"/></svg><span class="g" style="left:731px;top:409px;transform:scaleX(.88)">Normal</span>
<svg style="left:806px;top:408px" width="13" height="16" viewBox="0 0 13 16"><use href="#page"/></svg><span class="g" style="left:824px;top:409px;transform:scaleX(.875)">Created</span>
<span class="g" style="left:929px;top:409px;transform:scaleX(.9)">0 %</span>
<div style="left:17px;top:428px;width:968px;height:22px;background:#d9e8f5;border-bottom:1px solid #9ca5ad"></div>
<div style="left:71px;top:428px;width:1px;height:21px;background:#9ca5ad"></div>
<div style="left:707px;top:428px;width:1px;height:21px;background:#9ca5ad"></div>
<div style="left:800px;top:428px;width:1px;height:21px;background:#9ca5ad"></div>
<div style="left:891px;top:428px;width:1px;height:21px;background:#9ca5ad"></div>
<div style="left:37px;top:432px;width:13px;height:13px;background:linear-gradient(135deg,#c9c9c9,#ececec 55%,#fdfdfd) content-box,#fff;padding:1px;border:1px solid #8e8f8f"></div>
<span class="g" style="left:73.5px;top:431px;max-width:745px;overflow:hidden;transform:scaleX(0.8388)">Perform a feasibility study to determine the most feasible and viable solution.</span>
<svg style="left:711px;top:430px" width="16" height="16" viewBox="0 0 16 16"><use href="#prio"/></svg><span class="g" style="left:731px;top:431px;transform:scaleX(.88)">Normal</span>
<svg style="left:806px;top:430px" width="13" height="16" viewBox="0 0 13 16"><use href="#page"/></svg><span class="g" style="left:824px;top:431px;transform:scaleX(.875)">Created</span>
<span class="g" style="left:929px;top:431px;transform:scaleX(.9)">0 %</span>
<div style="left:17px;top:450px;width:968px;height:22px;background:#d9e8f5;border-bottom:1px solid #9ca5ad"></div>
<div style="left:71px;top:450px;width:1px;height:21px;background:#9ca5ad"></div>
<div style="left:707px;top:450px;width:1px;height:21px;background:#9ca5ad"></div>
<div style="left:800px;top:450px;width:1px;height:21px;background:#9ca5ad"></div>
<div style="left:891px;top:450px;width:1px;height:21px;background:#9ca5ad"></div>
<div style="left:37px;top:454px;width:13px;height:13px;background:linear-gradient(135deg,#c9c9c9,#ececec 55%,#fdfdfd) content-box,#fff;padding:1px;border:1px solid #8e8f8f"></div>
<span class="g" style="left:73.5px;top:453px;max-width:745px;overflow:hidden;transform:scaleX(0.8518)">Identify and measure cost-effectiveness per solution.</span>
<svg style="left:711px;top:452px" width="16" height="16" viewBox="0 0 16 16"><use href="#prio"/></svg><span class="g" style="left:731px;top:453px;transform:scaleX(.88)">Normal</span>
<svg style="left:806px;top:452px" width="13" height="16" viewBox="0 0 13 16"><use href="#page"/></svg><span class="g" style="left:824px;top:453px;transform:scaleX(.875)">Created</span>
<span class="g" style="left:929px;top:453px;transform:scaleX(.9)">0 %</span>
<div style="left:17px;top:472px;width:968px;height:22px;background:#d9e8f5;border-bottom:1px solid #9ca5ad"></div>
<div style="left:71px;top:472px;width:1px;height:21px;background:#9ca5ad"></div>
<div style="left:707px;top:472px;width:1px;height:21px;background:#9ca5ad"></div>
<div style="left:800px;top:472px;width:1px;height:21px;background:#9ca5ad"></div>
<div style="left:891px;top:472px;width:1px;height:21px;background:#9ca5ad"></div>
<div style="left:37px;top:476px;width:13px;height:13px;background:linear-gradient(135deg,#c9c9c9,#ececec 55%,#fdfdfd) content-box,#fff;padding:1px;border:1px solid #8e8f8f"></div>
<span class="g" style="left:73.5px;top:475px;max-width:745px;overflow:hidden;transform:scaleX(0.8476)">Choose the most preferable solution, using the data obtained at the previous steps.</span>
<svg style="left:711px;top:474px" width="16" height="16" viewBox="0 0 16 16"><use href="#prio"/></svg><span class="g" style="left:731px;top:475px;transform:scaleX(.88)">Normal</span>
<svg style="left:806px;top:474px" width="13" height="16" viewBox="0 0 13 16"><use href="#page"/></svg><span class="g" style="left:824px;top:475px;transform:scaleX(.875)">Created</span>
<span class="g" style="left:929px;top:475px;transform:scaleX(.9)">0 %</span>
<div style="left:17px;top:494px;width:968px;height:22px;background:#d9e8f5;border-bottom:1px solid #9ca5ad"></div>
<div style="left:71px;top:494px;width:1px;height:21px;background:#9ca5ad"></div>
<div style="left:707px;top:494px;width:1px;height:21px;background:#9ca5ad"></div>
<div style="left:800px;top:494px;width:1px;height:21px;background:#9ca5ad"></div>
<div style="left:891px;top:494px;width:1px;height:21px;background:#9ca5ad"></div>
<div style="left:37px;top:498px;width:13px;height:13px;background:linear-gradient(135deg,#c9c9c9,#ececec 55%,#fdfdfd) content-box,#fff;padding:1px;border:1px solid #8e8f8f"></div>
<span class="g" style="left:73.5px;top:497px;max-width:745px;overflow:hidden;transform:scaleX(0.8544)">State about the need to run a project that implements the chosen (most feasible and cost-effective) solution.</span>
<svg style="left:711px;top:496px" width="16" height="16" viewBox="0 0 16 16"><use href="#prio"/></svg><span class="g" style="left:731px;top:497px;transform:scaleX(.88)">Normal</span>
<svg style="left:806px;top:496px" width="13" height="16" viewBox="0 0 13 16"><use href="#page"/></svg><span class="g" style="left:824px;top:497px;transform:scaleX(.875)">Created</span>
<span class="g" style="left:929px;top:497px;transform:scaleX(.9)">0 %</span>
<div style="left:17px;top:516px;width:968px;height:23px;background:#ffffe1"></div>
<div style="left:2px;top:538px;width:983px;height:1px;background:#9ca5ad"></div>
<div style="left:2px;top:539px;width:983px;height:18px;background:#f0ede1"></div>
<div style="left:16px;top:556px;width:969px;height:1px;background:#9ca5ad"></div>
<div style="left:5px;top:543px;width:9px;height:9px;background:linear-gradient(135deg,#fff,#d6d4c8);border:1px solid #8c8c8c;border-radius:1px"></div>
<div style="left:7px;top:547px;width:5px;height:1px;background:#2a3a8c"></div>
<span class="g" style="left:19px;top:540px;transform:scaleX(0.841)">Category: 3.Project Organization.</span>
<span class="g" style="left:186px;top:540px;transform:scaleX(.875)">[ Project Request  ]</span>
<div style="left:2px;top:557px;width:15px;height:155px;background:#f0ede1;border-right:1px solid #9ca5ad"></div>
<div style="left:17px;top:557px;width:968px;height:22px;background:#d9e8f5;border-bottom:1px solid #9ca5ad"></div>
<div style="left:71px;top:557px;width:1px;height:21px;background:#9ca5ad"></div>
<div style="left:707px;top:557px;width:1px;height:21px;background:#9ca5ad"></div>
<div style="left:800px;top:557px;width:1px;height:21px;background:#9ca5ad"></div>
<div style="left:891px;top:557px;width:1px;height:21px;background:#9ca5ad"></div>
<div style="left:37px;top:561px;width:13px;height:13px;background:linear-gradient(135deg,#c9c9c9,#ececec 55%,#fdfdfd) content-box,#fff;padding:1px;border:1px solid #8e8f8f"></div>
<span class="g" style="left:73.5px;top:560px;max-width:745px;overflow:hidden;transform:scaleX(0.8492)">Identify people and organizations (stakeholders) involved in or concerned by your project.</span>
<svg style="left:711px;top:559px" width="16" height="16" viewBox="0 0 16 16"><use href="#prio"/></svg><span class="g" style="left:731px;top:560px;transform:scaleX(.88)">Normal</span>
<svg style="left:806px;top:559px" width="13" height="16" viewBox="0 0 13 16"><use href="#page"/></svg><span class="g" style="left:824px;top:560px;transform:scaleX(.875)">Created</span>
<span class="g" style="left:929px;top:560px;transform:scaleX(.9)">0 %</span>
<div style="left:17px;top:579px;width:968px;height:22px;background:#d9e8f5;border-bottom:1px solid #9ca5ad"></div>
<div style="left:71px;top:579px;width:1px;height:21px;background:#9ca5ad"></div>
<div style="left:707px;top:579px;width:1px;height:21px;background:#9ca5ad"></div>
<div style="left:800px;top:579px;width:1px;height:21px;background:#9ca5ad"></div>
<div style="left:891px;top:579px;width:1px;height:21px;background:#9ca5ad"></div>
<div style="left:37px;top:583px;width:13px;height:13px;background:linear-gradient(135deg,#c9c9c9,#ececec 55%,#fdfdfd) content-box,#fff;padding:1px;border:1px solid #8e8f8f"></div>
<span class="g" style="left:73.5px;top:582px;max-width:745px;overflow:hidden;transform:scaleX(0.8578)">Identify how stakeholders will influence the project throughout its life-cycle.</span>
<svg style="left:711px;top:581px" width="16" height="16" viewBox="0 0 16 16"><use href="#prio"/></svg><span class="g" style="left:731px;top:582px;transform:scaleX(.88)">Normal</span>
<svg style="left:806px;top:581px" width="13" height="16" viewBox="0 0 13 16"><use href="#page"/></svg><span class="g" style="left:824px;top:582px;transform:scaleX(.875)">Created</span>
<span class="g" style="left:929px;top:582px;transform:scaleX(.9)">0 %</span>
<div style="left:17px;top:601px;width:968px;height:22px;background:#d9e8f5;border-bottom:1px solid #9ca5ad"></div>
<div style="left:71px;top:601px;width:1px;height:21px;background:#9ca5ad"></div>
<div style="left:707px;top:601px;width:1px;height:21px;background:#9ca5ad"></div>
<div style="left:800px;top:601px;width:1px;height:21px;background:#9ca5ad"></div>
<div style="left:891px;top:601px;width:1px;height:21px;background:#9ca5ad"></div>
<div style="left:37px;top:605px;width:13px;height:13px;background:linear-gradient(135deg,#c9c9c9,#ececec 55%,#fdfdfd) content-box,#fff;padding:1px;border:1px solid #8e8f8f"></div>
<span class="g" style="left:73.5px;top:604px;max-width:745px;overflow:hidden;transform:scaleX(0.8433)">Create an organizational chart that includes roles and responsibilities of stakeholders.</span>
<svg style="left:711px;top:603px" width="16" height="16" viewBox="0 0 16 16"><use href="#prio"/></svg><span class="g" style="left:731px;top:604px;transform:scaleX(.88)">Normal</span>
<svg style="left:806px;top:603px" width="13" height="16" viewBox="0 0 13 16"><use href="#page"/></svg><span class="g" style="left:824px;top:604px;transform:scaleX(.875)">Created</span>
<span class="g" style="left:929px;top:604px;transform:scaleX(.9)">0 %</span>
<div style="left:17px;top:623px;width:968px;height:22px;background:#d9e8f5;border-bottom:1px solid #9ca5ad"></div>
<div style="left:71px;top:623px;width:1px;height:21px;background:#9ca5ad"></div>
<div style="left:707px;top:623px;width:1px;height:21px;background:#9ca5ad"></div>
<div style="left:800px;top:623px;width:1px;height:21px;background:#9ca5ad"></div>
<div style="left:891px;top:623px;width:1px;height:21px;background:#9ca5ad"></div>
<div style="left:37px;top:627px;width:13px;height:13px;background:linear-gradient(135deg,#c9c9c9,#ececec 55%,#fdfdfd) content-box,#fff;padding:1px;border:1px solid #8e8f8f"></div>
<span class="g" style="left:73.5px;top:626px;max-width:745px;overflow:hidden;transform:scaleX(0.852)">Develop a governance structure that explains a mechanism for project oversight and strategic development.</span>
<svg style="left:711px;top:625px" width="16" height="16" viewBox="0 0 16 16"><use href="#prio"/></svg><span class="g" style="left:731px;top:626px;transform:scaleX(.88)">Normal</span>
<svg style="left:806px;top:625px" width="13" height="16" viewBox="0 0 13 16"><use href="#page"/></svg><span class="g" style="left:824px;top:626px;transform:scaleX(.875)">Created</span>
<span class="g" style="left:929px;top:626px;transform:scaleX(.9)">0 %</span>
<div style="left:17px;top:645px;width:968px;height:22px;background:#d9e8f5;border-bottom:1px solid #9ca5ad"></div>
<div style="left:71px;top:645px;width:1px;height:21px;background:#9ca5ad"></div>
<div style="left:707px;top:645px;width:1px;height:21px;background:#9ca5ad"></div>
<div style="left:800px;top:645px;width:1px;height:21px;background:#9ca5ad"></div>
<div style="left:891px;top:645px;width:1px;height:21px;background:#9ca5ad"></div>
<div style="left:37px;top:649px;width:13px;height:13px;background:linear-gradient(135deg,#c9c9c9,#ececec 55%,#fdfdfd) content-box,#fff;padding:1px;border:1px solid #8e8f8f"></div>
<span class="g" style="left:73.5px;top:648px;max-width:745px;overflow:hidden;transform:scaleX(0.8483)">Create a work decomposition chart that explains what kind of work is required for performing the project.</span>
<svg style="left:711px;top:647px" width="16" height="16" viewBox="0 0 16 16"><use href="#prio"/></svg><span class="g" style="left:731px;top:648px;transform:scaleX(.88)">Normal</span>
<svg style="left:806px;top:647px" width="13" height="16" viewBox="0 0 13 16"><use href="#page"/></svg><span class="g" style="left:824px;top:648px;transform:scaleX(.875)">Created</span>
<span class="g" style="left:929px;top:648px;transform:scaleX(.9)">0 %</span>
<div style="left:17px;top:667px;width:968px;height:22px;background:#d9e8f5;border-bottom:1px solid #9ca5ad"></div>
<div style="left:71px;top:667px;width:1px;height:21px;background:#9ca5ad"></div>
<div style="left:707px;top:667px;width:1px;height:21px;background:#9ca5ad"></div>
<div style="left:800px;top:667px;width:1px;height:21px;background:#9ca5ad"></div>
<div style="left:891px;top:667px;width:1px;height:21px;background:#9ca5ad"></div>
<div style="left:37px;top:671px;width:13px;height:13px;background:linear-gradient(135deg,#c9c9c9,#ececec 55%,#fdfdfd) content-box,#fff;padding:1px;border:1px solid #8e8f8f"></div>
<span class="g" style="left:73.5px;top:670px;max-width:745px;overflow:hidden;transform:scaleX(0.8515)">Design a team composition chart that includes names of people involved in the project team.</span>
<svg style="left:711px;top:669px" width="16" height="16" viewBox="0 0 16 16"><use href="#prio"/></svg><span class="g" style="left:731px;top:670px;transform:scaleX(.88)">Normal</span>
<svg style="left:806px;top:669px" width="13" height="16" viewBox="0 0 13 16"><use href="#page"/></svg><span class="g" style="left:824px;top:670px;transform:scaleX(.875)">Created</span>
<span class="g" style="left:929px;top:670px;transform:scaleX(.9)">0 %</span>
<div style="left:17px;top:689px;width:968px;height:23px;background:#ffffe1"></div>
<div style="left:2px;top:711px;width:983px;height:1px;background:#9ca5ad"></div>
<div style="left:2px;top:712px;width:983px;height:18px;background:#f0ede1"></div>
<div style="left:16px;top:729px;width:969px;height:1px;background:#9ca5ad"></div>
<div style="left:5px;top:716px;width:9px;height:9px;background:linear-gradient(135deg,#fff,#d6d4c8);border:1px solid #8c8c8c;border-radius:1px"></div>
<div style="left:7px;top:720px;width:5px;height:1px;background:#2a3a8c"></div>
<span class="g" style="left:19px;top:713px;transform:scaleX(0.854)">Category: 4.Project Request</span>
<span class="g" style="left:164px;top:713px;transform:scaleX(.875)">[ Project Request  ]</span>
<div style="left:2px;top:730px;width:15px;height:177px;background:#f0ede1;border-right:1px solid #9ca5ad"></div>
<div style="left:17px;top:730px;width:968px;height:22px;background:#d9e8f5;border-bottom:1px solid #9ca5ad"></div>
<div style="left:71px;top:730px;width:1px;height:21px;background:#9ca5ad"></div>
<div style="left:707px;top:730px;width:1px;height:21px;background:#9ca5ad"></div>
<div style="left:800px;top:730px;width:1px;height:21px;background:#9ca5ad"></div>
<div style="left:891px;top:730px;width:1px;height:21px;background:#9ca5ad"></div>
<div style="left:37px;top:734px;width:13px;height:13px;background:linear-gradient(135deg,#c9c9c9,#ececec 55%,#fdfdfd) content-box,#fff;padding:1px;border:1px solid #8e8f8f"></div>
<span class="g" style="left:73.5px;top:733px;max-width:745px;overflow:hidden;transform:scaleX(0.849)">Develop a project request form that includes a description of the project and its organization (incl. feasibility study results).</span>
<svg style="left:711px;top:732px" width="16" height="16" viewBox="0 0 16 16"><use href="#prio"/></svg><span class="g" style="left:731px;top:733px;transform:scaleX(.88)">Normal</span>
<svg style="left:806px;top:732px" width="13" height="16" viewBox="0 0 13 16"><use href="#page"/></svg><span class="g" style="left:824px;top:733px;transform:scaleX(.875)">Created</span>
<span class="g" style="left:929px;top:733px;transform:scaleX(.9)">0 %</span>
<div style="left:17px;top:752px;width:968px;height:22px;background:#d9e8f5;border-bottom:1px solid #9ca5ad"></div>
<div style="left:71px;top:752px;width:1px;height:21px;background:#9ca5ad"></div>
<div style="left:707px;top:752px;width:1px;height:21px;background:#9ca5ad"></div>
<div style="left:800px;top:752px;width:1px;height:21px;background:#9ca5ad"></div>
<div style="left:891px;top:752px;width:1px;height:21px;background:#9ca5ad"></div>
<div style="left:37px;top:756px;width:13px;height:13px;background:linear-gradient(135deg,#c9c9c9,#ececec 55%,#fdfdfd) content-box,#fff;padding:1px;border:1px solid #8e8f8f"></div>
<span class="g" style="left:73.5px;top:755px;max-width:745px;overflow:hidden;transform:scaleX(0.8499)">Send the document to the company&#x27;s senior management, or to the project sponsor.</span>
<svg style="left:711px;top:754px" width="16" height="16" viewBox="0 0 16 16"><use href="#prio"/></svg><span class="g" style="left:731px;top:755px;transform:scaleX(.88)">Normal</span>
<svg style="left:806px;top:754px" width="13" height="16" viewBox="0 0 13 16"><use href="#page"/></svg><span class="g" style="left:824px;top:755px;transform:scaleX(.875)">Created</span>
<span class="g" style="left:929px;top:755px;transform:scaleX(.9)">0 %</span>
<div style="left:17px;top:774px;width:968px;height:22px;background:#d9e8f5;border-bottom:1px solid #9ca5ad"></div>
<div style="left:71px;top:774px;width:1px;height:21px;background:#9ca5ad"></div>
<div style="left:707px;top:774px;width:1px;height:21px;background:#9ca5ad"></div>
<div style="left:800px;top:774px;width:1px;height:21px;background:#9ca5ad"></div>
<div style="left:891px;top:774px;width:1px;height:21px;background:#9ca5ad"></div>
<div style="left:37px;top:778px;width:13px;height:13px;background:linear-gradient(135deg,#c9c9c9,#ececec 55%,#fdfdfd) content-box,#fff;padding:1px;border:1px solid #8e8f8f"></div>
<span class="g" style="left:73.5px;top:777px;max-width:745px;overflow:hidden;transform:scaleX(0.8618)">Receive and review the sponsor&#x27;s reply.</span>
<svg style="left:711px;top:776px" width="16" height="16" viewBox="0 0 16 16"><use href="#prio"/></svg><span class="g" style="left:731px;top:777px;transform:scaleX(.88)">Normal</span>
<svg style="left:806px;top:776px" width="13" height="16" viewBox="0 0 13 16"><use href="#page"/></svg><span class="g" style="left:824px;top:777px;transform:scaleX(.875)">Created</span>
<span class="g" style="left:929px;top:777px;transform:scaleX(.9)">0 %</span>
<div style="left:17px;top:796px;width:968px;height:22px;background:#d9e8f5;border-bottom:1px solid #9ca5ad"></div>
<div style="left:71px;top:796px;width:1px;height:21px;background:#9ca5ad"></div>
<div style="left:707px;top:796px;width:1px;height:21px;background:#9ca5ad"></div>
<div style="left:800px;top:796px;width:1px;height:21px;background:#9ca5ad"></div>
<div style="left:891px;top:796px;width:1px;height:21px;background:#9ca5ad"></div>
<div style="left:37px;top:800px;width:13px;height:13px;background:linear-gradient(135deg,#c9c9c9,#ececec 55%,#fdfdfd) content-box,#fff;padding:1px;border:1px solid #8e8f8f"></div>
<span class="g" style="left:73.5px;top:799px;max-width:745px;overflow:hidden;transform:scaleX(0.841)">Consider and follow any suggestions or requirements left by the sponsor.</span>
<svg style="left:711px;top:798px" width="16" height="16" viewBox="0 0 16 16"><use href="#prio"/></svg><span class="g" style="left:731px;top:799px;transform:scaleX(.88)">Normal</span>
<svg style="left:806px;top:798px" width="13" height="16" viewBox="0 0 13 16"><use href="#page"/></svg><span class="g" style="left:824px;top:799px;transform:scaleX(.875)">Created</span>
<span class="g" style="left:929px;top:799px;transform:scaleX(.9)">0 %</span>
<div style="left:17px;top:818px;width:968px;height:22px;background:#d9e8f5;border-bottom:1px solid #9ca5ad"></div>
<div style="left:71px;top:818px;width:1px;height:21px;background:#9ca5ad"></div>
<div style="left:707px;top:818px;width:1px;height:21px;background:#9ca5ad"></div>
<div style="left:800px;top:818px;width:1px;height:21px;background:#9ca5ad"></div>
<div style="left:891px;top:818px;width:1px;height:21px;background:#9ca5ad"></div>
<div style="left:37px;top:822px;width:13px;height:13px;background:linear-gradient(135deg,#c9c9c9,#ececec 55%,#fdfdfd) content-box,#fff;padding:1px;border:1px solid #8e8f8f"></div>
<span class="g" style="left:73.5px;top:821px;max-width:745px;overflow:hidden;transform:scaleX(0.85)">Initiate the project if the request is satisfied and the sponsor approves the project.</span>
<svg style="left:711px;top:820px" width="16" height="16" viewBox="0 0 16 16"><use href="#prio"/></svg><span class="g" style="left:731px;top:821px;transform:scaleX(.88)">Normal</span>
<svg style="left:806px;top:820px" width="13" height="16" viewBox="0 0 13 16"><use href="#page"/></svg><span class="g" style="left:824px;top:821px;transform:scaleX(.875)">Created</span>
<span class="g" style="left:929px;top:821px;transform:scaleX(.9)">0 %</span>
<div style="left:17px;top:840px;width:968px;height:22px;background:#d9e8f5;border-bottom:1px solid #9ca5ad"></div>
<div style="left:71px;top:840px;width:1px;height:21px;background:#9ca5ad"></div>
<div style="left:707px;top:840px;width:1px;height:21px;background:#9ca5ad"></div>
<div style="left:800px;top:840px;width:1px;height:21px;background:#9ca5ad"></div>
<div style="left:891px;top:840px;width:1px;height:21px;background:#9ca5ad"></div>
<div style="left:37px;top:844px;width:13px;height:13px;background:linear-gradient(135deg,#c9c9c9,#ececec 55%,#fdfdfd) content-box,#fff;padding:1px;border:1px solid #8e8f8f"></div>
<span class="g" style="left:73.5px;top:843px;max-width:745px;overflow:hidden;transform:scaleX(0.8545)">Consider reworking the project concept if the request is rejected.</span>
<svg style="left:711px;top:842px" width="16" height="16" viewBox="0 0 16 16"><use href="#prio"/></svg><span class="g" style="left:731px;top:843px;transform:scaleX(.88)">Normal</span>
<svg style="left:806px;top:842px" width="13" height="16" viewBox="0 0 13 16"><use href="#page"/></svg><span class="g" style="left:824px;top:843px;transform:scaleX(.875)">Created</span>
<span class="g" style="left:929px;top:843px;transform:scaleX(.9)">0 %</span>
<div style="left:17px;top:862px;width:968px;height:22px;background:#d9e8f5;border-bottom:1px solid #9ca5ad"></div>
<div style="left:71px;top:862px;width:1px;height:21px;background:#9ca5ad"></div>
<div style="left:707px;top:862px;width:1px;height:21px;background:#9ca5ad"></div>
<div style="left:800px;top:862px;width:1px;height:21px;background:#9ca5ad"></div>
<div style="left:891px;top:862px;width:1px;height:21px;background:#9ca5ad"></div>
<div style="left:37px;top:866px;width:13px;height:13px;background:linear-gradient(135deg,#c9c9c9,#ececec 55%,#fdfdfd) content-box,#fff;padding:1px;border:1px solid #8e8f8f"></div>
<span class="g" style="left:73.5px;top:865px;max-width:745px;overflow:hidden;transform:scaleX(0.8564)">Do all the steps of this checklist again to rework your project and develop a new request.</span>
<svg style="left:711px;top:864px" width="16" height="16" viewBox="0 0 16 16"><use href="#prio"/></svg><span class="g" style="left:731px;top:865px;transform:scaleX(.88)">Normal</span>
<svg style="left:806px;top:864px" width="13" height="16" viewBox="0 0 13 16"><use href="#page"/></svg><span class="g" style="left:824px;top:865px;transform:scaleX(.875)">Created</span>
<span class="g" style="left:929px;top:865px;transform:scaleX(.9)">0 %</span>
<div style="left:17px;top:884px;width:968px;height:23px;background:#ffffe1"></div>
<div style="left:2px;top:906px;width:983px;height:1px;background:#9ca5ad"></div>
<div style="left:984px;top:126px;width:1px;height:780px;background:#9ca5ad"></div>
<div style="left:2px;top:978px;width:983px;height:24px;background:#ffffe1;border-top:1px solid #b0b0b0"></div>
<div style="left:73px;top:981px;width:634px;height:19px;background:#e7e9eb;border:1px solid #d4d4d4;border-top-color:#a8a8a8;border-left-color:#a8a8a8"></div>
<span class="gb" style="left:76px;top:983px;transform:scaleX(.945)">Count: 28</span>
<!-- status bar -->
<div style="left:0px;top:1004px;width:1280px;height:20px;background:#f0eeee"></div>
<div style="left:0px;top:1003px;width:986px;height:1px;background:#fbfbfb"></div>
<div style="left:0px;top:1004px;width:986px;height:1px;background:#c6c6c6"></div>
<div style="left:0px;top:1022px;width:1280px;height:1px;background:#2a2a2a"></div>
<div style="left:0px;top:1023px;width:1280px;height:1px;background:#707070"></div>
<div style="left:60px;top:1023px;width:57px;height:1px;background:#d8d8d8"></div>
<div style="left:122px;top:1023px;width:56px;height:1px;background:#d8d8d8"></div>
<div style="left:371px;top:1023px;width:49px;height:1px;background:#d8d8d8"></div>
<div style="left:432px;top:1023px;width:55px;height:1px;background:#d8d8d8"></div>
<div style="left:492px;top:1023px;width:56px;height:1px;background:#d8d8d8"></div>
<div style="left:1266px;top:1023px;width:14px;height:1px;background:#d8d8d8"></div>
<!-- categories bar -->
<div style="left:986px;top:76px;width:293px;height:354px;background:#fff;border:1px solid #000;border-radius:3px 3px 0 0"></div>
<div style="left:988px;top:78px;width:289px;height:20px;background:#fff;border:1px solid #d5d8de;border-radius:3px"></div>
<span class="th" style="left:992px;top:81px">Categories Bar</span>
<div style="left:1228px;top:81px;width:14px;height:14px;background:linear-gradient(#eef1f6,#dfe3ea 70%,#b9d7f6 92%);border:1px solid #7b93bb;border-radius:2px"></div>
<div style="left:1229px;top:82px;width:12px;height:11px;border:1px solid #5a6170;border-radius:1px;background:linear-gradient(#f4f5f8,#d9dce4)"></div>
<div style="left:1232px;top:85px;width:6px;height:4px;border:1px solid #4d5563;background:#c9ced8"></div>
<svg style="left:1245px;top:81px" width="13" height="14" viewBox="0 0 13 14"><path d="M3.5 1.5 H9.5 M4.8 1.5 V5.5 L2.5 8 H10.5 L8.2 5.5 V1.5 M6.5 8 V12.5" fill="#e6e6e6" stroke="#8a8a8a" stroke-width="1.1"/><path d="M7.2 2.5 V6" stroke="#b0b0b0" stroke-width="1.2"/></svg>
<div style="left:1260px;top:81px;width:14px;height:14px;background:linear-gradient(#d59c94 0,#c0655a 45%,#a93a30 50%,#b9564a 100%);border:1px solid #7e2f28;border-radius:2px"></div>
<svg style="left:1264px;top:85px" width="7" height="7" viewBox="0 0 7 7"><path d="M1 1 L6 6 M6 1 L1 6" stroke="#fff" stroke-width="2"/></svg>
<div style="left:987px;top:98px;width:291px;height:31px;background:linear-gradient(#fff 0,#f6f7fc 35%,#d3d9ee 40%,#d9deef 70%,#e9ecf7 100%)"></div>
<div style="left:993px;top:105px;width:2px;height:2px;background:#fff"></div>
<div style="left:992px;top:104px;width:2px;height:2px;background:#aab0c6"></div>
<div style="left:993px;top:109px;width:2px;height:2px;background:#fff"></div>
<div style="left:992px;top:108px;width:2px;height:2px;background:#aab0c6"></div>
<div style="left:993px;top:113px;width:2px;height:2px;background:#fff"></div>
<div style="left:992px;top:112px;width:2px;height:2px;background:#aab0c6"></div>
<div style="left:993px;top:117px;width:2px;height:2px;background:#fff"></div>
<div style="left:992px;top:116px;width:2px;height:2px;background:#aab0c6"></div>
<div style="left:993px;top:121px;width:2px;height:2px;background:#fff"></div>
<div style="left:992px;top:120px;width:2px;height:2px;background:#aab0c6"></div>
<div style="left:993px;top:125px;width:2px;height:2px;background:#fff"></div>
<div style="left:992px;top:124px;width:2px;height:2px;background:#aab0c6"></div>
<svg style="left:1002px;top:107px" width="16" height="16" viewBox="0 0 16 16"><use href="#ct0"/></svg>
<svg style="left:1025px;top:107px" width="16" height="16" viewBox="0 0 16 16"><use href="#ct1"/></svg>
<svg style="left:1050px;top:107px" width="16" height="16" viewBox="0 0 16 16"><use href="#ct2"/></svg>
<svg style="left:1074px;top:108px" width="16" height="16" viewBox="0 0 16 16"><use href="#ct3"/></svg>
<svg style="left:1096px;top:120px" width="5" height="3" viewBox="0 0 5 3"><use href="#dar"/></svg>
<div style="left:988px;top:129px;width:290px;height:296px;background:#fff;border:1px solid #828790"></div>
<div style="left:989px;top:130px;width:288px;height:16px;background:linear-gradient(#fff,#f7f7f7 50%,#ececec);border-bottom:1px solid #d5d5d5"></div>
<div style="left:1215px;top:130px;width:1px;height:15px;background:#dedede"></div>
<div style="left:1253px;top:130px;width:1px;height:15px;background:#dedede"></div>
<span class="th" style="left:1218px;top:132px">UnD…</span>
<span class="th" style="left:1256px;top:132px">T…</span>
<div style="left:994px;top:151px;width:9px;height:9px;background:linear-gradient(135deg,#fff,#d6d4c8);border:1px solid #8c8c8c;border-radius:1px"></div>
<div style="left:996px;top:155px;width:5px;height:1px;background:#2a3a8c"></div>
<div style="left:1003px;top:155px;width:5px;height:1px;background:repeating-linear-gradient(90deg,#a8a8a8 0 1px,transparent 1px 2px)"></div>
<div style="left:1017px;top:164px;width:1px;height:64px;background:repeating-linear-gradient(#a8a8a8 0 1px,transparent 1px 2px)"></div>
<div style="left:1017px;top:173px;width:9px;height:1px;background:repeating-linear-gradient(90deg,#a8a8a8 0 1px,transparent 1px 2px)"></div>
<div style="left:1017px;top:191px;width:9px;height:1px;background:repeating-linear-gradient(90deg,#a8a8a8 0 1px,transparent 1px 2px)"></div>
<div style="left:1017px;top:209px;width:9px;height:1px;background:repeating-linear-gradient(90deg,#a8a8a8 0 1px,transparent 1px 2px)"></div>
<div style="left:1017px;top:227px;width:9px;height:1px;background:repeating-linear-gradient(90deg,#a8a8a8 0 1px,transparent 1px 2px)"></div>
<span class="gb" style="left:1049.5px;top:148px;transform:scaleX(0.978)">Project Request</span>
<span class="gb" style="left:1206px;width:47px;text-align:right;top:148px;transform-origin:100% 0;transform:scaleX(.95)">28</span>
<span class="gb" style="left:1229px;width:47px;text-align:right;top:148px;transform-origin:100% 0;transform:scaleX(.95)">28</span>
<svg style="left:1030px;top:147px" width="17" height="16" viewBox="0 0 17 16"><use href="#ti0"/></svg>
<span class="gb" style="left:1049.5px;top:166px;transform:scaleX(0.958)">1.Context Analysis.</span>
<span class="gb" style="left:1206px;width:47px;text-align:right;top:166px;transform-origin:100% 0;transform:scaleX(.95)">7</span>
<span class="gb" style="left:1229px;width:47px;text-align:right;top:166px;transform-origin:100% 0;transform:scaleX(.95)">7</span>
<svg style="left:1030px;top:167px" width="17" height="16" viewBox="0 0 17 16"><use href="#ti1"/></svg>
<span class="gb" style="left:1049.5px;top:184px;transform:scaleX(0.934)">2.Feasibility Analysis.</span>
<span class="gb" style="left:1206px;width:47px;text-align:right;top:184px;transform-origin:100% 0;transform:scaleX(.95)">8</span>
<span class="gb" style="left:1229px;width:47px;text-align:right;top:184px;transform-origin:100% 0;transform:scaleX(.95)">8</span>
<svg style="left:1030px;top:184px" width="17" height="16" viewBox="0 0 17 16"><use href="#ti2"/></svg>
<span class="gb" style="left:1049.5px;top:202px;transform:scaleX(0.973)">3.Project Organization.</span>
<span class="gb" style="left:1206px;width:47px;text-align:right;top:202px;transform-origin:100% 0;transform:scaleX(.95)">6</span>
<span class="gb" style="left:1229px;width:47px;text-align:right;top:202px;transform-origin:100% 0;transform:scaleX(.95)">6</span>
<svg style="left:1030px;top:201px" width="17" height="16" viewBox="0 0 17 16"><use href="#ti3"/></svg>
<span class="gb" style="left:1049.5px;top:220px;transform:scaleX(0.975)">4.Project Request</span>
<span class="gb" style="left:1206px;width:47px;text-align:right;top:220px;transform-origin:100% 0;transform:scaleX(.95)">7</span>
<span class="gb" style="left:1229px;width:47px;text-align:right;top:220px;transform-origin:100% 0;transform:scaleX(.95)">7</span>
<svg style="left:1030px;top:220px" width="17" height="16" viewBox="0 0 17 16"><use href="#ti4"/></svg>
<svg style="left:1008px;top:147px" width="16" height="16" viewBox="0 0 16 16"><use href="#folder"/></svg>
<div style="left:992px;top:425px;width:134px;height:1px;background:repeating-linear-gradient(90deg,#8a8a8a 0 3px,#d8d8d8 3px 4px,#999 4px 6px,#eee 6px 7px,#888 7px 11px,#ddd 11px 13px)"></div>
<!-- filters bar -->
<div style="left:986px;top:428px;width:293px;height:576px;background:#f0f0f0;border:1px solid #000;border-radius:3px 3px 0 0"></div>
<div style="left:987px;top:429px;width:291px;height:22px;background:#fff"></div>
<div style="left:988px;top:430px;width:289px;height:20px;background:#fff;border:1px solid #d5d8de;border-radius:3px"></div>
<span class="th" style="left:991px;top:433px">Filters Bar</span>
<div style="left:1228px;top:433px;width:14px;height:14px;background:linear-gradient(#eef1f6,#dfe3ea 70%,#b9d7f6 92%);border:1px solid #7b93bb;border-radius:2px"></div>
<div style="left:1229px;top:434px;width:12px;height:11px;border:1px solid #5a6170;border-radius:1px;background:linear-gradient(#f4f5f8,#d9dce4)"></div>
<div style="left:1232px;top:437px;width:6px;height:4px;border:1px solid #4d5563;background:#c9ced8"></div>
<svg style="left:1245px;top:433px" width="13" height="14" viewBox="0 0 13 14"><path d="M3.5 1.5 H9.5 M4.8 1.5 V5.5 L2.5 8 H10.5 L8.2 5.5 V1.5 M6.5 8 V12.5" fill="#e6e6e6" stroke="#8a8a8a" stroke-width="1.1"/><path d="M7.2 2.5 V6" stroke="#b0b0b0" stroke-width="1.2"/></svg>
<div style="left:1260px;top:433px;width:14px;height:14px;background:linear-gradient(#d59c94 0,#c0655a 45%,#a93a30 50%,#b9564a 100%);border:1px solid #7e2f28;border-radius:2px"></div>
<svg style="left:1264px;top:437px" width="7" height="7" viewBox="0 0 7 7"><path d="M1 1 L6 6 M6 1 L1 6" stroke="#fff" stroke-width="2"/></svg>
<div style="left:987px;top:450px;width:291px;height:31px;background:linear-gradient(#fff 0,#f6f7fc 35%,#d3d9ee 40%,#d9deef 70%,#e9ecf7 100%)"></div>
<div style="left:993px;top:457px;width:2px;height:2px;background:#fff"></div>
<div style="left:992px;top:456px;width:2px;height:2px;background:#aab0c6"></div>
<div style="left:993px;top:461px;width:2px;height:2px;background:#fff"></div>
<div style="left:992px;top:460px;width:2px;height:2px;background:#aab0c6"></div>
<div style="left:993px;top:465px;width:2px;height:2px;background:#fff"></div>
<div style="left:992px;top:464px;width:2px;height:2px;background:#aab0c6"></div>
<div style="left:993px;top:469px;width:2px;height:2px;background:#fff"></div>
<div style="left:992px;top:468px;width:2px;height:2px;background:#aab0c6"></div>
<div style="left:993px;top:473px;width:2px;height:2px;background:#fff"></div>
<div style="left:992px;top:472px;width:2px;height:2px;background:#aab0c6"></div>
<div style="left:993px;top:477px;width:2px;height:2px;background:#fff"></div>
<div style="left:992px;top:476px;width:2px;height:2px;background:#aab0c6"></div>
<svg style="left:1094px;top:459px" width="17" height="16" viewBox="0 0 17 16"><use href="#tb14"/></svg>
<svg style="left:1113px;top:465px" width="5" height="3" viewBox="0 0 5 3"><use href="#dar"/></svg>
<svg style="left:1128px;top:460px" width="17" height="15" viewBox="0 0 17 15"><use href="#ft1"/></svg>
<svg style="left:1153px;top:460px" width="14" height="14" viewBox="0 0 14 14"><use href="#tb15"/></svg>
<svg style="left:1175px;top:471px" width="5" height="3" viewBox="0 0 5 3"><use href="#dar"/></svg>
<div style="left:997px;top:456px;width:93px;height:22px;background:#a9c9ef;border:1px solid #9fb4d0"></div>
<div style="left:1083px;top:457px;width:6px;height:20px;background:linear-gradient(90deg,#f4f4f4,#dcdcdc)"></div>
<svg style="left:1083px;top:465px" width="6" height="4" viewBox="0 0 6 4"><path d="M0 0 H6 L3 4 Z" fill="#9a9a9a"/></svg>
<span class="ui" style="left:1000px;top:459px;color:#76879c;font-size:12.5px">Custom</span>
<div style="left:988px;top:481px;width:290px;height:491px;background:#f0f0f0;border:2px solid #8e8e8e;border-bottom-width:1px"></div>
<div style="left:1088px;top:482px;width:1px;height:189px;background:#9a9a9a"></div>
<div style="left:990px;top:671px;width:286px;height:1px;background:#b4b4b4"></div>
<div style="left:990px;top:503px;width:286px;height:1px;background:repeating-linear-gradient(90deg,#a2a2a2 0 1px,transparent 1px 2px)"></div>
<span class="th" style="left:1005px;top:485px;max-width:83px;overflow:hidden">Completion</span>
<div style="left:1259px;top:483px;width:17px;height:20px;background:linear-gradient(#fff 0,#f4f4f4 48%,#d9d9d9 52%,#e2e2e2 100%);border:1px solid #8f8f8f;box-shadow:inset 0 0 0 1px #fff"></div>
<svg style="left:1264px;top:491px" width="8" height="4" viewBox="0 0 8 4"><path d="M0 0 H8 L4 4 Z" fill="#000"/></svg>
<div style="left:990px;top:524px;width:286px;height:1px;background:repeating-linear-gradient(90deg,#a2a2a2 0 1px,transparent 1px 2px)"></div>
<span class="th" style="left:1005px;top:506px;max-width:83px;overflow:hidden">Due Date</span>
<div style="left:1259px;top:504px;width:17px;height:20px;background:linear-gradient(#fff 0,#f4f4f4 48%,#d9d9d9 52%,#e2e2e2 100%);border:1px solid #8f8f8f;box-shadow:inset 0 0 0 1px #fff"></div>
<svg style="left:1264px;top:512px" width="8" height="4" viewBox="0 0 8 4"><path d="M0 0 H8 L4 4 Z" fill="#000"/></svg>
<div style="left:990px;top:545px;width:286px;height:1px;background:repeating-linear-gradient(90deg,#a2a2a2 0 1px,transparent 1px 2px)"></div>
<span class="th" style="left:1005px;top:527px;max-width:83px;overflow:hidden">Status</span>
<div style="left:1259px;top:525px;width:17px;height:20px;background:linear-gradient(#fff 0,#f4f4f4 48%,#d9d9d9 52%,#e2e2e2 100%);border:1px solid #8f8f8f;box-shadow:inset 0 0 0 1px #fff"></div>
<svg style="left:1264px;top:533px" width="8" height="4" viewBox="0 0 8 4"><path d="M0 0 H8 L4 4 Z" fill="#000"/></svg>
<div style="left:990px;top:566px;width:286px;height:1px;background:repeating-linear-gradient(90deg,#a2a2a2 0 1px,transparent 1px 2px)"></div>
<span class="th" style="left:1005px;top:548px;max-width:83px;overflow:hidden">Priority</span>
<div style="left:1259px;top:546px;width:17px;height:20px;background:linear-gradient(#fff 0,#f4f4f4 48%,#d9d9d9 52%,#e2e2e2 100%);border:1px solid #8f8f8f;box-shadow:inset 0 0 0 1px #fff"></div>
<svg style="left:1264px;top:554px" width="8" height="4" viewBox="0 0 8 4"><path d="M0 0 H8 L4 4 Z" fill="#000"/></svg>
<div style="left:990px;top:587px;width:286px;height:1px;background:repeating-linear-gradient(90deg,#a2a2a2 0 1px,transparent 1px 2px)"></div>
<span class="th" style="left:1005px;top:569px;max-width:83px;overflow:hidden">Task Name</span>
<div style="left:990px;top:608px;width:286px;height:1px;background:repeating-linear-gradient(90deg,#a2a2a2 0 1px,transparent 1px 2px)"></div>
<span class="th" style="left:1005px;top:590px;max-width:83px;overflow:hidden">Date Created</span>
<div style="left:1259px;top:588px;width:17px;height:20px;background:linear-gradient(#fff 0,#f4f4f4 48%,#d9d9d9 52%,#e2e2e2 100%);border:1px solid #8f8f8f;box-shadow:inset 0 0 0 1px #fff"></div>
<svg style="left:1264px;top:596px" width="8" height="4" viewBox="0 0 8 4"><path d="M0 0 H8 L4 4 Z" fill="#000"/></svg>
<div style="left:990px;top:629px;width:286px;height:1px;background:repeating-linear-gradient(90deg,#a2a2a2 0 1px,transparent 1px 2px)"></div>
<span class="th" style="left:1005px;top:611px;max-width:83px;overflow:hidden">Date Last Modified</span>
<div style="left:1259px;top:609px;width:17px;height:20px;background:linear-gradient(#fff 0,#f4f4f4 48%,#d9d9d9 52%,#e2e2e2 100%);border:1px solid #8f8f8f;box-shadow:inset 0 0 0 1px #fff"></div>
<svg style="left:1264px;top:617px" width="8" height="4" viewBox="0 0 8 4"><path d="M0 0 H8 L4 4 Z" fill="#000"/></svg>
<div style="left:990px;top:650px;width:286px;height:1px;background:repeating-linear-gradient(90deg,#a2a2a2 0 1px,transparent 1px 2px)"></div>
<span class="th" style="left:1005px;top:632px;max-width:83px;overflow:hidden">Date Opened</span>
<div style="left:1259px;top:630px;width:17px;height:20px;background:linear-gradient(#fff 0,#f4f4f4 48%,#d9d9d9 52%,#e2e2e2 100%);border:1px solid #8f8f8f;box-shadow:inset 0 0 0 1px #fff"></div>
<svg style="left:1264px;top:638px" width="8" height="4" viewBox="0 0 8 4"><path d="M0 0 H8 L4 4 Z" fill="#000"/></svg>
<span class="th" style="left:1005px;top:653px;max-width:83px;overflow:hidden">Date Completed</span>
<div style="left:1259px;top:651px;width:17px;height:20px;background:linear-gradient(#fff 0,#f4f4f4 48%,#d9d9d9 52%,#e2e2e2 100%);border:1px solid #8f8f8f;box-shadow:inset 0 0 0 1px #fff"></div>
<svg style="left:1264px;top:659px" width="8" height="4" viewBox="0 0 8 4"><path d="M0 0 H8 L4 4 Z" fill="#000"/></svg>
<div style="left:987px;top:972px;width:291px;height:30px;background:#fff"></div>
<div style="left:988px;top:978px;width:290px;height:1px;background:#9a9a9a"></div>
<div style="left:988px;top:975px;width:1px;height:3px;background:#9a9a9a"></div>
<div style="left:1277px;top:975px;width:1px;height:3px;background:#9a9a9a"></div>
<div style="left:1048px;top:979px;width:77px;height:20px;background:linear-gradient(#dcdcdc,#ececec 60%,#f0f0f0);border:1px solid #b4b4b4;border-top:none;border-left:none"></div>
<div style="left:992px;top:978px;width:57px;height:22px;background:#fff;border:1px solid #a8a8a8;border-top:none;border-right:2px solid #8e8e8e"></div>
<span class="th" style="left:995px;top:981px">Filters Bar</span>
<span class="th" style="left:1051px;top:981px">Navigation Bar</span>
<div style="left:986px;top:790px;width:1px;height:190px;background:#8e8e8e"></div>
<div style="left:986px;top:980px;width:2px;height:23px;background:#000"></div>
<div style="left:1278px;top:980px;width:2px;height:23px;background:#000"></div>
<div style="left:986px;top:1002px;width:294px;height:2px;background:#000"></div>
</body></html>
